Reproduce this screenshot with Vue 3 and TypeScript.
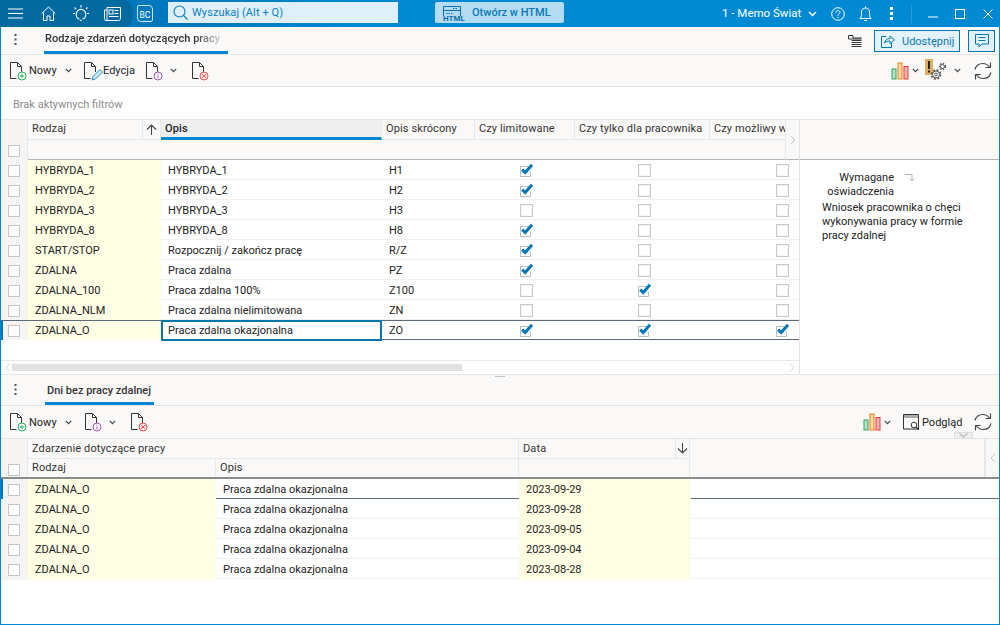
<script setup lang="ts">
interface Row { kod: string; opis: string; skrot: string; lim: boolean; prac: boolean; moz: boolean; sel?: boolean }
const rows: Row[] = [
  { kod: 'HYBRYDA_1', opis: 'HYBRYDA_1', skrot: 'H1', lim: true, prac: false, moz: false },
  { kod: 'HYBRYDA_2', opis: 'HYBRYDA_2', skrot: 'H2', lim: true, prac: false, moz: false },
  { kod: 'HYBRYDA_3', opis: 'HYBRYDA_3', skrot: 'H3', lim: false, prac: false, moz: false },
  { kod: 'HYBRYDA_8', opis: 'HYBRYDA_8', skrot: 'H8', lim: true, prac: false, moz: false },
  { kod: 'START/STOP', opis: 'Rozpocznij / zakończ pracę', skrot: 'R/Z', lim: true, prac: false, moz: false },
  { kod: 'ZDALNA', opis: 'Praca zdalna', skrot: 'PZ', lim: true, prac: false, moz: false },
  { kod: 'ZDALNA_100', opis: 'Praca zdalna 100%', skrot: 'Z100', lim: false, prac: true, moz: false },
  { kod: 'ZDALNA_NLM', opis: 'Praca zdalna nielimitowana', skrot: 'ZN', lim: false, prac: false, moz: false },
  { kod: 'ZDALNA_O', opis: 'Praca zdalna okazjonalna', skrot: 'ZO', lim: true, prac: true, moz: true, sel: true },
]
const dni: string[] = ['2023-09-29', '2023-09-28', '2023-09-05', '2023-09-04', '2023-08-28']
</script>

<template>
  <div class="app">
    <svg class="defs" width="0" height="0">
      <defs>
        <symbol id="doc" viewBox="0 0 20 20">
          <path d="M1.500 17.500V1.500h7l4 4v5.500M8.500 1.500v4h4M1.500 17.500h6" fill="none" stroke="#333" stroke-width="1" />
        </symbol>
        <symbol id="chev" viewBox="0 0 9 6">
          <path d="M1 1l3.500 3.500L8 1" fill="none" stroke="#444" stroke-width="1.500" />
        </symbol>
        <symbol id="box" viewBox="0 0 14 14">
          <rect x="1.500" y="1.500" width="11" height="11" fill="#fff" stroke="#c6c6c6" />
        </symbol>
        <symbol id="tick" viewBox="0 0 15 15">
          <path d="M1.500 3.500h8M1.500 3.500v10h10v-5" fill="#fff" stroke="#bcbcbc" />
          <path d="M3.200 6.600l3 2.900L13 1.800" fill="none" stroke="#0277b5" stroke-width="3" />
        </symbol>
        <symbol id="refresh" viewBox="0 0 20 20">
          <path d="M2 8.500C3 4.500 6 2.500 10 2.500c3 0 5 1.500 6.500 3.500M18 11.500C17 15.500 14 17.500 10 17.500c-3 0-5-1.500-6.500-3.500" fill="none" stroke="#444" stroke-width="1.100" />
          <path d="M17.500 1.500v5h-5M2.500 18.500v-5h5" fill="none" stroke="#444" stroke-width="1.100" />
        </symbol>
        <symbol id="chart" viewBox="0 0 18 18">
          <rect x="1" y="7" width="4" height="10" fill="#b6e2c6" stroke="#2fa35c" />
          <rect x="7" y="1" width="4" height="16" fill="#fbdca0" stroke="#ee7d22" />
          <rect x="13" y="4.500" width="4" height="12.500" fill="#f6b4b4" stroke="#e53c3c" />
        </symbol>
      </defs>
    </svg>

    <header class="topbar">
      <nav class="nav">
        <svg class="ic hamb" width="15" height="11" viewBox="0 0 15 11"><path d="M0 1h15M0 5.500h15M0 10h15" stroke="#fff" stroke-width="1" fill="none" /></svg>
        <svg class="ic home" width="15" height="15" viewBox="0 0 15 15"><path d="M.7 7.500L7.500 1l6.800 6.500M2.500 6.500v8h3.500v-4.500h3v4.500h3.500v-8" fill="none" stroke="#fff" stroke-width="1" /></svg>
        <svg class="ic bulb" width="18" height="18" viewBox="0 0 18 18"><path d="M7.500 15.200C5.500 14.600 4.200 12.500 4.200 10.200a4.800 4.800 0 0 1 9.600 0c0 2.300-1.300 4.400-3.300 5" fill="none" stroke="#fff" stroke-width="1.100" /><path d="M9 1v2.500M2.500 3.500l1.500 1.500M15.500 3.500L14 5M1 9.500h2M15 9.500h2M8 16l1.500.8" stroke="#fff" stroke-width="1.100" fill="none" /></svg>
        <svg class="ic news" width="17" height="14" viewBox="0 0 17 14"><path d="M3 .5h13.500v11c0 1-.6 2-2 2H2c-1 0-1.500-1-1.500-2V3H3zM3 3v10" fill="none" stroke="#fff" stroke-width="1" /><rect x="5" y="3" width="4" height="4" fill="none" stroke="#fff" /><path d="M10.500 3.500h4M10.500 6.500h4M5 9.500h9.500" stroke="#fff" fill="none" /></svg>
      </nav>
      <div class="bc"><span>BC</span></div>
      <div class="search">
        <svg width="15" height="15" viewBox="0 0 15 15"><circle cx="6.500" cy="6.500" r="5.500" fill="none" stroke="#0a7fbd" stroke-width="1.100" /><path d="M10.500 10.500L14.500 14.500" stroke="#0a7fbd" stroke-width="1.100" /></svg>
        <span>Wyszukaj (Alt + Q)</span>
      </div>
      <div class="html-btn">
        <span class="html-ic">
          <svg width="18" height="12" viewBox="0 0 18 12"><path d="M.5 10V.5h17V10M.5 4.500h17" fill="none" stroke="#0a6ea6" /><path d="M10 2.500h5M3 7.500h7" stroke="#0a6ea6" stroke-dasharray="1.500 1" fill="none" /></svg>
          <b>HTML</b>
        </span>
        <span class="html-t">Otwórz w HTML</span>
      </div>
      <div class="account">1 - Memo Świat</div>
      <svg class="ic w-chev" width="9" height="6" viewBox="0 0 9 6"><path d="M1 1l3.500 3.500L8 1" fill="none" stroke="#fff" stroke-width="1.500" /></svg>
      <svg class="ic w-help" width="14" height="14" viewBox="0 0 14 14"><circle cx="7" cy="7" r="6.300" fill="none" stroke="#fff" /><path d="M5 5.500C5 4 6 3.500 7 3.500s2 .8 2 1.800C9 7 7 6.800 7 8.700" fill="none" stroke="#fff" /><path d="M7 9.800v1.200" stroke="#fff" /></svg>
      <svg class="ic w-bell" width="13" height="16" viewBox="0 0 13 16"><path d="M.8 12.500h11.400c-1.200-1-1.700-2-1.700-4V6c0-2.500-1.700-4-4-4s-4 1.500-4 4v2.500c0 2-.5 3-1.700 4zM6.500.5V2M5 14.500h3" fill="none" stroke="#fff" /></svg>
      <svg class="ic w-dots" width="3" height="13" viewBox="0 0 3 13"><path d="M0 0h3v3H0zM0 5h3v3H0zM0 10h3v3H0z" fill="#fff" /></svg>
      <span class="w-sep"></span>
      <svg class="ic w-min" width="10" height="2" viewBox="0 0 10 2"><path d="M0 1h10" stroke="#fff" /></svg>
      <svg class="ic w-max" width="10" height="10" viewBox="0 0 10 10"><rect x=".5" y=".5" width="9" height="9" fill="none" stroke="#fff" /></svg>
      <svg class="ic w-close" width="10" height="10" viewBox="0 0 10 10"><path d="M.5.500l9 9M9.500.500l-9 9" fill="none" stroke="#fff" /></svg>
    </header>

    <main class="body">
      <div class="tabs">
        <svg class="kebab" width="3" height="11" viewBox="0 0 3 11"><path d="M.5 0h2v2h-2zM.5 4.500h2v2h-2zM.5 9h2v2h-2z" fill="#555" /></svg>
        <div class="tab first"><span class="fade">Rodzaje zdarzeń dotyczących pracy</span></div>
        <svg class="list-ic" width="14" height="12" viewBox="0 0 14 12"><path d="M.5 4V.5h4.500V3h8.500M.5 4h13M3.500 5.500h10M3.500 7.500h10M3.500 9.500h10M3.500 11.500h10" fill="none" stroke="#333" /></svg>
        <div class="share">
          <svg width="14" height="14" viewBox="0 0 14 14"><path d="M5 2.500H.5v11h10V9" fill="none" stroke="#0277b5" /><path d="M3.500 9C4 6 6 4.500 9 4.500V2l4.500 3.800L9 9.500V7C7 7 5 7.500 3.500 9z" fill="none" stroke="#0277b5" /></svg>
          <span>Udostępnij</span>
        </div>
        <div class="chat">
          <svg width="14" height="14" viewBox="0 0 14 14"><path d="M.5.500h13v9.500h-6.500l-3 3v-3h-3.500z" fill="none" stroke="#0277b5" /><path d="M3.500 3.500h7M3.500 6.500h7" stroke="#0277b5" fill="none" /></svg>
        </div>
      </div>

      <div class="toolbar">
        <span class="doc s10">
          <svg width="20" height="20"><use href="#doc" /></svg>
          <svg class="badge" width="10" height="10" viewBox="0 0 10 10"><circle cx="5" cy="5" r="4" fill="#fff" stroke="#22b45a" /><path d="M5 2.800v4.400M2.800 5h4.400" stroke="#22b45a" /></svg>
        </span>
        <span class="lbl l-nowy">Nowy</span>
        <svg class="tchev c-nowy" width="7" height="5"><use href="#chev" /></svg>
        <span class="doc s-ed">
          <svg width="20" height="20"><use href="#doc" /></svg>
          <svg class="pencil" width="12" height="13" viewBox="0 0 12 13"><path d="M1 12l1-3.500 7-7 2.500 2.500-7 7z" fill="#cfe6f5" stroke="#2a8fcf" /></svg>
        </span>
        <span class="lbl l-ed">Edycja</span>
        <span class="doc s-info">
          <svg width="20" height="20"><use href="#doc" /></svg>
          <svg class="badge" width="10" height="10" viewBox="0 0 10 10"><circle cx="5" cy="5" r="4" fill="#fff" stroke="#a855b5" /><path d="M5 4.200v3.200M5 2.500v1" stroke="#a855b5" /></svg>
        </span>
        <svg class="tchev c-info" width="7" height="5"><use href="#chev" /></svg>
        <span class="doc s-del">
          <svg width="20" height="20"><use href="#doc" /></svg>
          <svg class="badge" width="10" height="10" viewBox="0 0 10 10"><circle cx="5" cy="5" r="4" fill="#fde4e4" stroke="#ee4f4f" /><path d="M3.300 3.300l3.400 3.400M6.700 3.300l-3.400 3.400" stroke="#ee4f4f" /></svg>
        </span>
        <span class="spacer"></span>
        <svg width="18" height="18" class="t-chart"><use href="#chart" /></svg>
        <svg class="tchev c-chart" width="7" height="5"><use href="#chev" /></svg>
        <svg class="t-gear" width="24" height="24" viewBox="0 0 24 24">
          <rect x="0" y="3" width="8" height="16" fill="#dfb05f" />
          <path d="M3 5h2v8H3zM3 14.500h2v2H3z" fill="#222" />
          <circle cx="11" cy="18.500" r="3.500" fill="#faf9f8" stroke="#555" stroke-width="1" />
          <circle cx="11" cy="18.500" r="4.600" fill="none" stroke="#555" stroke-width="1.500" stroke-dasharray="2 1.600" />
          <circle cx="11" cy="18.500" r="1.400" fill="none" stroke="#555" />
          <circle cx="17.500" cy="10.500" r="2" fill="none" stroke="#555" />
          <circle cx="17.500" cy="10.500" r="3" fill="none" stroke="#555" stroke-width="1.300" stroke-dasharray="1.500 1.300" />
        </svg>
        <svg class="tchev c-gear" width="7" height="5"><use href="#chev" /></svg>
        <svg class="t-refresh" width="20" height="20"><use href="#refresh" /></svg>
      </div>

      <div class="filter">Brak aktywnych filtrów</div>

      <section class="top-grid">
        <div class="grid-area">
          <div class="head top-cols">
            <div class="h corner r2"><svg width="14" height="14" class="hbox"><use href="#box" /></svg></div>
            <div class="h rodzaj"><span>Rodzaj</span>
              <span class="sort"><svg width="11" height="11" viewBox="0 0 11 11"><path d="M5.500 11V1M1 5.500l4.500-4.500 4.500 4.500" fill="none" stroke="#444" stroke-width="1.100" /></svg></span>
            </div>
            <div class="h opis-h">Opis</div>
            <div class="h">Opis skrócony</div>
            <div class="h">Czy limitowane</div>
            <div class="h">Czy tylko dla pracownika</div>
            <div class="h clip">Czy możliwy w</div>
            <div class="h scroller r2"><svg width="6" height="10" viewBox="0 0 6 10"><path d="M1 1l4 4-4 4" fill="none" stroke="#c4c4c4" /></svg></div>
            <div class="h2"></div><div class="h2"></div><div class="h2"></div><div class="h2"></div><div class="h2"></div><div class="h2"></div>
          </div>
          <div v-for="r in rows" :key="r.kod" class="row top-rows" :class="{ sel: r.sel }">
            <div class="c0"><svg width="14" height="14"><use href="#box" /></svg></div>
            <div class="cy">{{ r.kod }}</div>
            <div class="ct" :class="{ focus: r.sel }">{{ r.opis }}</div>
            <div class="ct">{{ r.skrot }}</div>
            <div class="ck p-lim"><svg width="15" height="15" class="cb"><use :href="r.lim ? '#tick' : '#box'" /></svg></div>
            <div class="ck p-pr"><svg width="15" height="15" class="cb"><use :href="r.prac ? '#tick' : '#box'" /></svg></div>
            <div class="ck p-mo"><svg width="15" height="15" class="cb"><use :href="r.moz ? '#tick' : '#box'" /></svg></div>
          </div>
          <div class="grow"></div>
          <div class="hscroll">
            <svg width="6" height="9" viewBox="0 0 6 9"><path d="M5 .5L1 4.500l4 4" fill="none" stroke="#d0d0d0" /></svg>
            <span class="thumb"></span>
            <span class="track"></span>
            <svg width="6" height="9" viewBox="0 0 6 9"><path d="M1 .5l4 4-4 4" fill="none" stroke="#d0d0d0" /></svg>
          </div>
        </div>
        <aside class="panel">
          <div class="panel-h"></div>
          <div class="panel-t">
            <div class="pt-text">Wymagane<br />oświadczenia</div>
            <svg width="12" height="8" viewBox="0 0 12 8"><path d="M0 .5h7v6M4.500 4.500L7 7l2.500-2.500" fill="none" stroke="#b5b5b5" /></svg>
          </div>
          <p class="panel-d">Wniosek pracownika o chęci wykonywania pracy w formie pracy zdalnej</p>
        </aside>
      </section>

      <div class="tabs second">
        <svg class="kebab" width="3" height="11" viewBox="0 0 3 11"><path d="M.5 0h2v2h-2zM.5 4.500h2v2h-2zM.5 9h2v2h-2z" fill="#555" /></svg>
        <div class="tab sec">Dni bez pracy zdalnej</div>
        <span class="split"></span>
      </div>

      <div class="toolbar tb2">
        <span class="doc s10">
          <svg width="20" height="20"><use href="#doc" /></svg>
          <svg class="badge" width="10" height="10" viewBox="0 0 10 10"><circle cx="5" cy="5" r="4" fill="#fff" stroke="#22b45a" /><path d="M5 2.800v4.400M2.800 5h4.400" stroke="#22b45a" /></svg>
        </span>
        <span class="lbl l-nowy">Nowy</span>
        <svg class="tchev c-nowy" width="7" height="5"><use href="#chev" /></svg>
        <span class="doc s-info2">
          <svg width="20" height="20"><use href="#doc" /></svg>
          <svg class="badge" width="10" height="10" viewBox="0 0 10 10"><circle cx="5" cy="5" r="4" fill="#fff" stroke="#a855b5" /><path d="M5 4.200v3.200M5 2.500v1" stroke="#a855b5" /></svg>
        </span>
        <svg class="tchev c-info" width="7" height="5"><use href="#chev" /></svg>
        <span class="doc s-del">
          <svg width="20" height="20"><use href="#doc" /></svg>
          <svg class="badge" width="10" height="10" viewBox="0 0 10 10"><circle cx="5" cy="5" r="4" fill="#fde4e4" stroke="#ee4f4f" /><path d="M3.300 3.300l3.400 3.400M6.700 3.300l-3.400 3.400" stroke="#ee4f4f" /></svg>
        </span>
        <span class="spacer"></span>
        <svg width="18" height="18" class="t-chart"><use href="#chart" /></svg>
        <svg class="tchev c-chart" width="7" height="5"><use href="#chev" /></svg>
        <svg class="t-view" width="16" height="16" viewBox="0 0 16 16"><path d="M.5.5h15v14.500H.5z" fill="none" stroke="#333" /><path d="M1 1h14v3H1z" fill="#aaa" /><circle cx="11" cy="11" r="2.800" fill="#fff" stroke="#333" /><path d="M13 13l3 3" stroke="#333" stroke-width="1.200" /></svg>
        <span class="lbl l-pod">Podgląd</span>
        <svg class="t-refresh2" width="20" height="20"><use href="#refresh" /></svg>
        <span class="collapse"><svg width="9" height="5" viewBox="0 0 9 5"><path d="M.5.5l4 3.500 4-3.500" fill="none" stroke="#999" /></svg></span>
      </div>

      <div class="head bot-cols">
        <div class="h corner r2 c-end"><svg width="14" height="14" class="hbox"><use href="#box" /></svg></div>
        <div class="h group">Zdarzenie dotyczące pracy</div>
        <div class="h data">Data</div>
        <div class="h sort2"><svg width="11" height="11" viewBox="0 0 11 11"><path d="M5.500 0v10M1 5.500L5.500 10l4.500-4.500" fill="none" stroke="#444" stroke-width="1.100" /></svg></div>
        <div class="h blank r2"></div>
        <div class="h scroller r2"><svg width="6" height="10" viewBox="0 0 6 10"><path d="M5 1L1 5l4 4" fill="none" stroke="#c4c4c4" /></svg></div>
        <div class="h sub">Rodzaj</div>
        <div class="h sub">Opis</div>
        <div class="h2 d2"></div>
      </div>
      <div v-for="(d, i) in dni" :key="d" class="row bot-rows" :class="{ sel: i === 0 }">
        <div class="c0"><svg width="14" height="14"><use href="#box" /></svg></div>
        <div class="cy">ZDALNA_O</div>
        <div class="ct">Praca zdalna okazjonalna</div>
        <div class="cy">{{ d }}</div>
        <div></div>
      </div>
    </main>
  </div>
</template>

<style>
html, body { margin: 0; padding: 0; overflow: hidden; }
</style>

<style scoped>
.app { width: 1000px; height: 625px; display: flex; flex-direction: column; font: 11px Roboto, sans-serif; color: #222; background: #fff; }
.defs { position: absolute; }
.ic { flex: none; display: block; }

.topbar { height: 27px; flex: none; display: flex; align-items: center; background: linear-gradient(90deg, #0078bd 20%, #0089d3 35%); color: #fff; }
.nav { width: 133px; height: 27px; flex: none; display: flex; align-items: center; background: #026a9f; border-radius: 0 9px 7px 0 / 0 14px 13px 0; box-sizing: border-box; }
.hamb { margin-left: 8px; }
.home { margin-left: 18px; }
.bulb { margin-left: 16px; margin-top: -1px; }
.news { margin-left: 14px; }
.bc { margin-left: 4px; width: 16px; height: 17px; box-sizing: border-box; border: 1px solid #cfe6f5; border-radius: 2px 4px 2px 4px; display: flex; align-items: center; justify-content: center; flex: none; }
.bc span { font-size: 8.5px; padding-top: 3px; }
.search { margin-left: 15px; width: 230px; height: 21px; background: #dff0fa; display: flex; align-items: center; gap: 4px; padding-left: 5px; box-sizing: border-box; color: #0a7fbd; font-size: 11px; letter-spacing: .1px; flex: none; margin-top: -3px; }
.html-btn { margin-left: 37px; width: 129px; height: 21px; margin-top: -3px; background: #b3dcf3; color: #0b78b4; font-size: 11px; font-weight: 500; display: flex; align-items: center; border-radius: 2px; flex: none; }
.html-ic { width: 29px; margin-left: 8px; position: relative; height: 21px; display: block; flex: none; }
.html-ic svg { position: absolute; left: 0; top: 4px; }
.html-ic b { position: absolute; left: 0; top: 12px; font-size: 8px; line-height: 9px; color: #0a6ea6; }
.html-t { white-space: nowrap; }
.account { margin-left: 158px; font-size: 11.5px; white-space: nowrap; width: 86px; flex: none; margin-top: -2px; }
.w-help { margin-left: 14px; }
.w-bell { margin-left: 14px; }
.w-dots { margin-left: 18px; }
.w-sep { margin-left: 18px; width: 1px; height: 18px; background: #2a9cdb; flex: none; }
.w-min { margin-left: 16px; margin-top: 6px; }
.w-max { margin-left: 17px; }
.w-close { margin-left: 18px; }

.body { flex: 1; min-height: 0; display: flex; flex-direction: column; border: 1px solid #0288d1; border-top: 0; background: #fff; }

.tabs { height: 28px; flex: none; box-sizing: border-box; display: flex; align-items: flex-start; background: #faf9f8; border-bottom: 1px solid #e4e4e4; position: relative; }
.kebab { margin-left: 13px; margin-top: 7px; flex: none; }
.tab { font-weight: 500; height: 27px; box-sizing: border-box; border-bottom: 3px solid #0288d1; flex: none; line-height: 24px; color: #333; }
.tab.first { margin-left: 27px; width: 184px; padding-left: 1px; }
.fade { display: block; width: 178px; white-space: nowrap; overflow: hidden; -webkit-mask-image: linear-gradient(90deg, #000 84%, rgba(0,0,0,.12)); mask-image: linear-gradient(90deg, #000 84%, rgba(0,0,0,.12)); }
.list-ic { margin-left: 620px; margin-top: 8px; flex: none; }
.share { margin-left: 12px; margin-top: 3px; width: 86px; height: 22px; box-sizing: border-box; border: 1px solid #0277b5; background: #e3f2fb; color: #0b78b4; display: flex; align-items: center; gap: 7px; padding-left: 6px; flex: none; }
.chat { margin-left: 8px; margin-top: 3px; width: 27px; height: 22px; box-sizing: border-box; border: 1px solid #0277b5; background: #e3f2fb; display: flex; align-items: center; justify-content: center; flex: none; }

.toolbar { height: 32px; flex: none; box-sizing: border-box; display: flex; align-items: center; background: #faf9f8; border-bottom: 1px solid #e4e4e4; position: relative; }
.tb2 { height: 33px; }
.doc { position: relative; width: 20px; height: 20px; display: block; flex: none; }
.doc svg { display: block; }
.doc .badge { position: absolute; right: 2px; bottom: 0; }
.doc .pencil { position: absolute; right: 0; bottom: 0; }
.s10 { margin-left: 8px; }
.lbl { flex: none; white-space: nowrap; color: #222; }
.l-nowy { width: 35px; }
.tchev { flex: none; display: block; }
.c-nowy { margin-left: 1px; }
.s-ed { margin-left: 11px; }
.l-ed { width: 32px; }
.s-info { margin-left: 10px; }
.s-info2 { margin-left: 12px; }
.c-info { margin-left: 5px; }
.s-del { margin-left: 14px; }
.spacer { flex: 1; }
.t-chart { flex: none; }
.c-chart { margin-left: 3px; }
.t-gear { margin-left: 6px; margin-top: -5px; flex: none; }
.c-gear { margin-left: 5px; }
.t-refresh { margin-left: 12px; margin-right: 6px; flex: none; }
.t-view { margin-left: 12px; flex: none; }
.l-pod { margin-left: 3px; width: 41px; }
.t-refresh2 { margin-left: 10px; margin-right: 6px; flex: none; }
.collapse { position: absolute; right: 26px; bottom: -1px; width: 19px; height: 7px; background: #eee; border: 1px solid #ddd; box-sizing: border-box; display: flex; align-items: center; justify-content: center; }

.filter { height: 32px; flex: none; box-sizing: border-box; padding-left: 12px; line-height: 36px; color: #8a8a8a; background: #fff; }

.top-grid { height: 256px; flex: none; box-sizing: border-box; border-top: 1px solid #e4e4e4; border-bottom: 1px solid #e4e4e4; display: flex; }
.grid-area { width: 799px; flex: none; box-sizing: border-box; border-right: 1px solid #e4e4e4; display: flex; flex-direction: column; }

.head { display: grid; flex: none; background: #faf9f8; grid-template-rows: 20px 20px; box-sizing: border-box; color: #333; }
.top-cols { grid-template-columns: 27px 133px 221px 93px 100px 135px 75px 14px; border-bottom: 1px solid #b5b5b5; height: 40px; }
.top-rows { grid-template-columns: 27px 133px 221px 93px 100px 135px 89px; }
.h { box-sizing: border-box; border-bottom: 1px solid #e8e8e8; border-right: 1px solid #e8e8e8; padding-left: 4px; line-height: 18px; letter-spacing: .12px; white-space: nowrap; overflow: hidden; position: relative; }
.r2 { grid-row: span 2; border-bottom: 0; }
.corner { padding: 0; background: #f6f5f4; border-bottom: 0; display: flex; align-items: flex-end; padding-left: 6px; padding-bottom: 2px; }
.rodzaj { display: flex; justify-content: space-between; padding-right: 0; }
.sort { width: 17px; height: 19px; flex: none; border-left: 1px solid #e8e8e8; display: flex; align-items: center; justify-content: center; }
.opis-h { background: #efefef; font-weight: 500; border-bottom: 3px solid #0288d1; color: #222; }
.clip { border-right: 0; }
.scroller { border-right: 0; border-left: 1px solid #e8e8e8; display: flex; align-items: center; justify-content: center; padding: 0; }

.row { display: grid; height: 20px; flex: none; box-sizing: border-box; border-bottom: 1px solid #efefef; line-height: 21px; white-space: nowrap; }
.row.sel { border-top: 1px solid #5d6b78; border-bottom: 1px solid #5d6b78; line-height: 19px; }
.c0 { background: #f6f5f4; padding-left: 6px; display: flex; align-items: center; box-sizing: border-box; }
.row.sel .c0 { border-left: 2px solid #0277b5; padding-left: 4px; }
.cy { background: #fefee4; padding-left: 7px; }
.ct { padding-left: 7px; overflow: hidden; }
.focus { border: 2px solid #0277a8; margin: -1px 0; padding-left: 5px; line-height: 17px; background: #fff; }
.ck { display: flex; align-items: center; }
.cb { display: block; flex: none; }
.p-lim { padding-left: 44px; }
.p-pr { padding-left: 62px; }
.p-mo { padding-left: 65px; }
.grow { flex: 1; }
.hscroll { height: 14px; flex: none; box-sizing: border-box; border-top: 1px solid #e8e8e8; display: flex; align-items: center; padding: 0 4px; }
.thumb { width: 450px; height: 7px; margin-left: 1px; background: #e1e1e1; flex: none; }
.track { flex: 1; }

.panel { flex: 1; display: flex; flex-direction: column; background: #fff; }
.panel-h { height: 40px; flex: none; box-sizing: border-box; background: #faf9f8; border-bottom: 1px solid #b5b5b5; }
.panel-t { display: flex; align-items: flex-start; margin-top: 11px; }
.pt-text { width: 94px; text-align: right; line-height: 14px; flex: none; }
.panel-t svg { margin-left: 11px; margin-top: 3px; flex: none; }
.panel-d { margin: 2px 26px 0 22px; line-height: 14px; }

.tabs.second { height: 31px; }
.tabs.second .kebab { margin-top: 9px; }
.tab.sec { margin-left: 28px; width: 109px; height: 30px; padding-left: 2px; line-height: 32px; }
.split { position: absolute; left: 494px; top: 1px; width: 10px; height: 1px; border-top: 1px dashed #bbb; }

.bot-cols { grid-template-columns: 27px 188px 303px 156px 15px 295px 14px; height: 40px; border-bottom: 2px solid #8c8c8c; grid-template-rows: 20px 18px; }
.bot-cols .h { line-height: 20px; }
.bot-cols .sub { line-height: 18px; }
.bot-cols .corner { padding-bottom: 0; }
.bot-rows { grid-template-columns: 27px 188px 303px 172px 1fr; }
.group { grid-column: span 2; }
.sub { border-bottom: 0; }
.data { border-bottom: 1px solid #e8e8e8; border-right: 0; }
.sort2 { padding: 0; display: flex; align-items: center; justify-content: center; border-left: 1px solid #e8e8e8; }
.blank { padding: 0; }
.d2 { grid-column: span 2; border-right: 1px solid #e8e8e8; }
.bot-rows.sel { border-top: 0; line-height: 21px; }
</style>
